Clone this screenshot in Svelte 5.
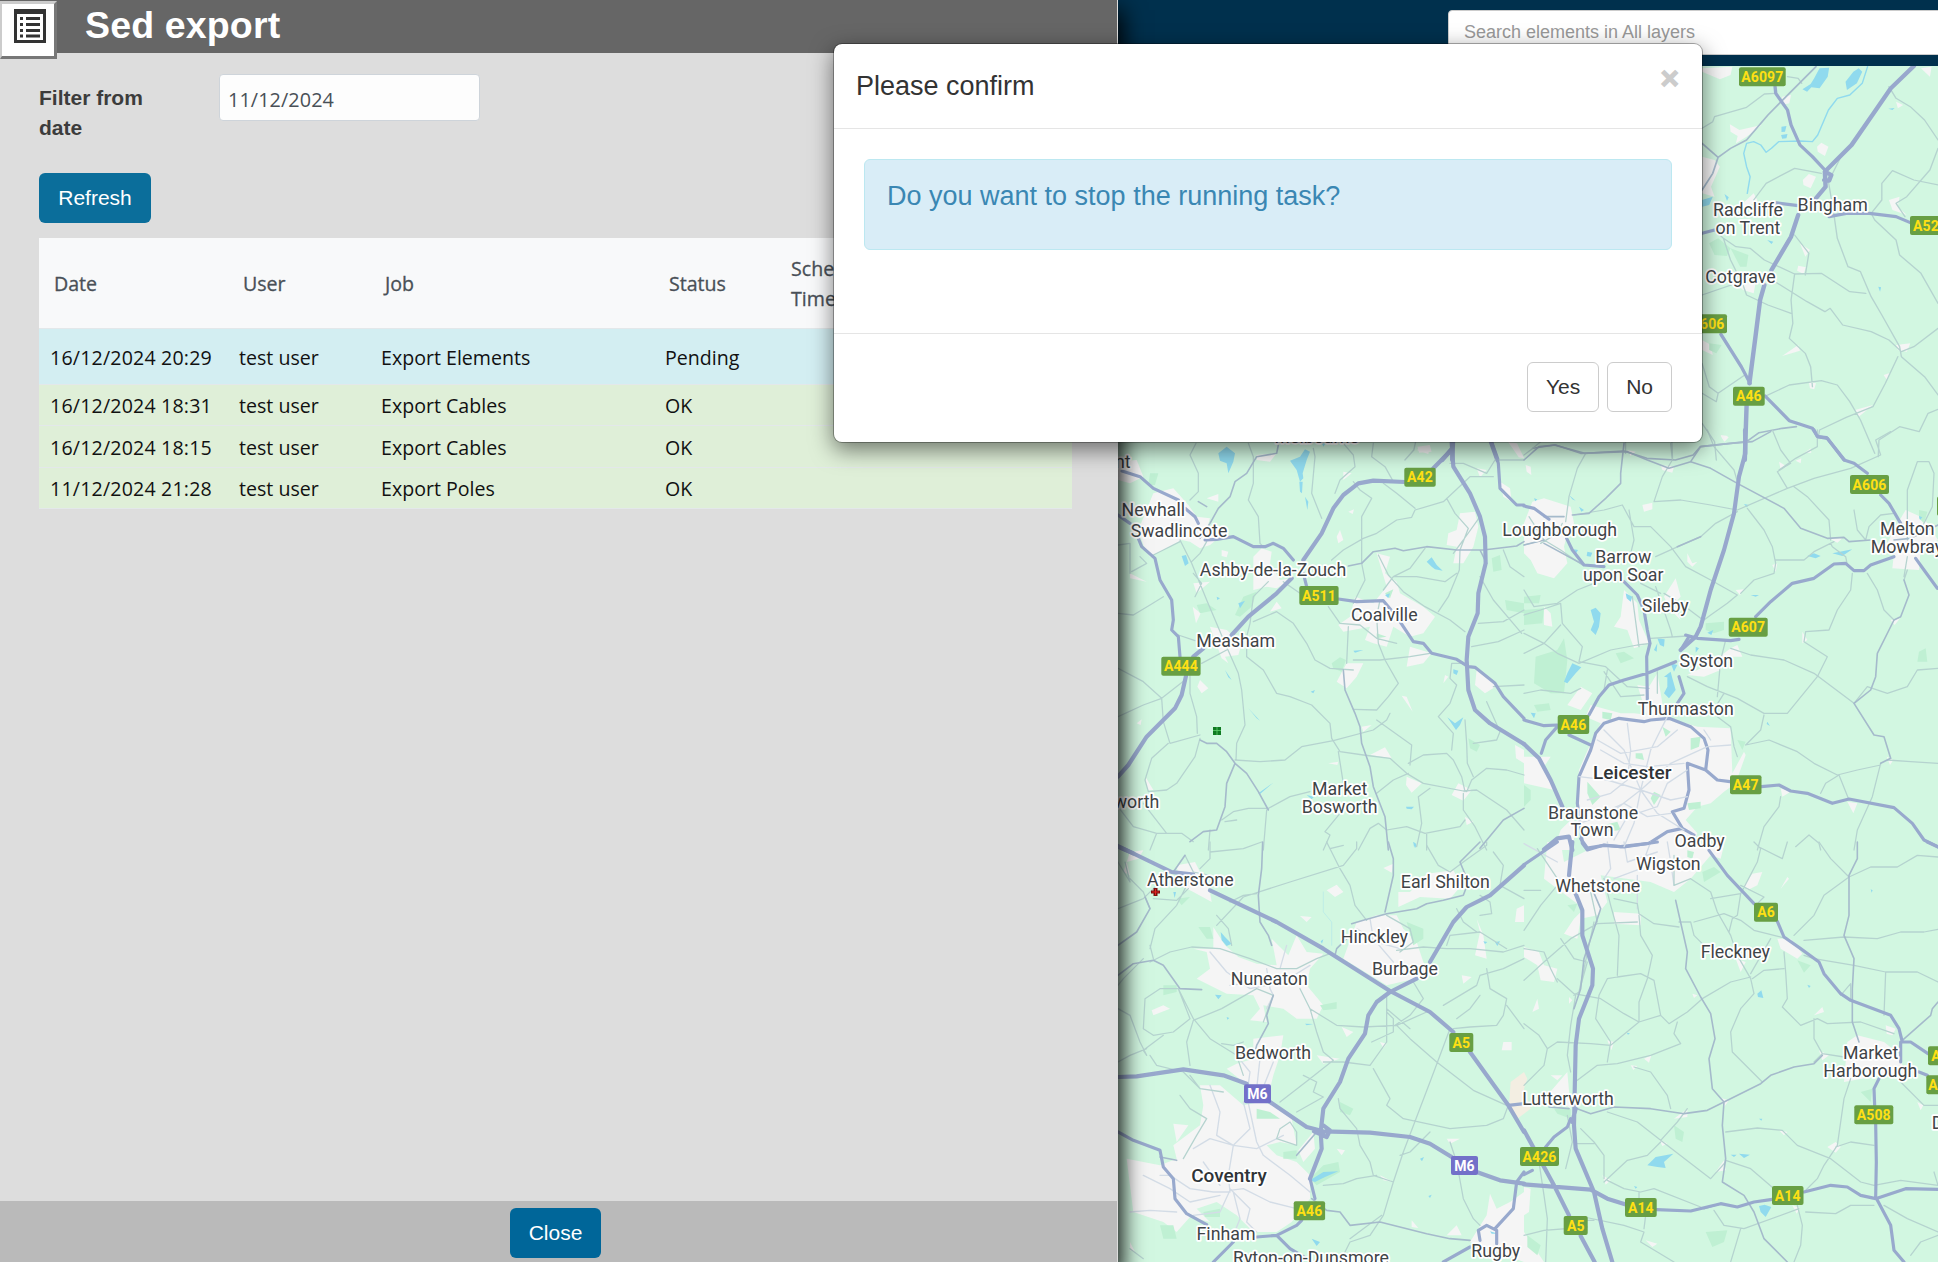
<script>
  const columns = ['Date', 'User', 'Job', 'Status', 'Scheduled Time'];
  const jobs = [
    { date: '16/12/2024 20:29', user: 'test user', job: 'Export Elements', status: 'Pending', state: 'pending' },
    { date: '16/12/2024 18:31', user: 'test user', job: 'Export Cables', status: 'OK', state: 'done' },
    { date: '16/12/2024 18:15', user: 'test user', job: 'Export Cables', status: 'OK', state: 'done tall' },
    { date: '11/12/2024 21:28', user: 'test user', job: 'Export Poles', status: 'OK', state: 'done' }
  ];

  const third = 1 / 3;

  // Each tile holds its own vector layers, drawn in tile units.
  const tiles = [
    {
      at: `translate(1380 0) scale(.3559 ${third})`,
      urban: 'M905 205 990 200 985 225 955 238 905 215ZM983 373 1010 390 1072 375 1030 410 1000 430 1005 408 985 395ZM905 470 940 480 955 500 930 560 940 590 905 580ZM1130 290 1155 285 1150 310 1130 315ZM1228 440 1240 428 1260 440 1250 468 1230 455ZM1188 540 1205 522 1225 530 1210 565 1190 555ZM1430 600 1460 590 1455 620 1480 645 1440 630ZM990 640 1050 580 1060 600 1030 625ZM1000 850 1055 850 1050 880 1020 870ZM1130 1068 1175 1035 1180 1052ZM1450 1035 1490 1030 1480 1055 1455 1050ZM1180 730 1208 750 1195 770ZM1175 797 1197 802 1190 822 1172 812ZM1205 1145 1225 1150 1220 1168 1208 1165ZM1335 1230 1385 1215 1345 1250ZM1415 1125 1435 1118 1425 1140ZM905 1020 930 1035 935 1065 905 1050ZM957 1308 980 1312 968 1325ZM105 1340 140 1335 145 1355 110 1358ZM360 1326 385 1330 405 1375 390 1372ZM1520 205 1550 200 1545 230ZM1450 305 1470 315 1455 325Z',
      wood: 'M925 730 950 715 985 745 975 768 940 765ZM985 745 1035 765 1030 800 1012 800ZM925 1030 960 1035 945 1060 925 1050Z',
      water: 'M1235 205 1262 203 1258 230 1235 265 1212 262 1200 275 1187 268 1210 252 1220 235ZM1330 215 1345 205 1355 215 1340 250 1312 270 1308 245ZM1128 380 1142 378 1138 395 1128 396ZM1127 405 1145 402 1142 415 1130 416ZM905 600 935 590 925 615 905 620ZM968 582 980 592 975 603ZM1088 720 1105 725 1100 732ZM1400 860 1408 862 1405 875ZM1428 326 1446 324 1440 330Z',
      river: 'M1370 200 1355 250 1320 285 1285 295 1260 330 1230 405 1215 425 1180 423 1120 425 1100 445 1085 457 1070 435 1050 425 1030 430 1022 460 1030 500 1040 530 1032 580',
      minor: 'M905 385 935 365 940 350 1030 322 1080 282 1110 280M1145 230 1175 235 1185 250M1430 260 1450 295 1490 320 1530 360 1568 420M1568 445 1545 510 1480 590 1450 610 1475 650M1050 600 1085 550 1165 505 1240 520M1295 470 1260 545 1275 640 1285 715 1315 800 1350 815 1380 890 1410 945 1460 1040 1465 1070 1530 1130 1568 1185M1165 705 1205 760 1195 825M940 690 965 715 1000 740 1040 745 1080 780 1165 822 1240 820 1320 875 1365 880M965 715 985 780 1020 855 1030 885 1090 915 1155 940M1165 822 1155 900 1160 970 1150 1015 1195 1060 1210 1100 1215 1160M1110 845 1200 905 1250 935 1265 925 1300 975 1380 995 1430 1020 1465 1055 1500 1040 1568 985M1080 1190 1150 1155 1240 1142 1285 1155 1320 1205 1350 1260 1390 1360M1380 640 1390 660 1450 720 1460 765 1520 820 1568 910M1380 640 1410 600 1410 550 1440 512 1500 540 1568 555M1455 1070 1420 1150 1385 1220 1310 1252 1235 1290 1232 1310M905 885 1000 850M905 1180 945 1205 950 1180 1025 1125M905 1090 925 1160 950 1180M1400 1370 1402 1320 1460 1280 1515 1295 1540 1240 1568 1228M905 1270 940 1325 945 1380M690 1326 690 1360M820 1326 822 1380M100 1326 95 1350 70 1380',
      road: 'M1225 200 1150 280 1090 345 1030 420 985 445 950 472 905 430M950 472 935 520 905 570M430 1345 490 1335 575 1360 685 1353 750 1375 830 1380 880 1365 900 1340 1030 1325 1065 1298 1130 1285 1170 1280',
      trunk: 'M1110 260 1112 280 1145 330 1155 375 1180 435 1215 470 1250 510M1262 650 1310 640 1375 640 1450 650 1490 668M1110 608 1175 617M905 700 940 690M958 1003 1015 1100 1040 1150M1082 1188 1150 1262 1172 1270 1215 1285 1230 1310 1255 1313 1305 1380',
      motor: 'M1500 198 1435 265 1390 335 1325 435 1250 515 1252 560 1225 595M1175 645 1155 710 1100 810M1080 855 1068 900 1055 1010 1038 1150M1030 1217 1025 1380M205 1326 203 1380M312 1326 330 1380M203 1345 175 1380M1250 515 1268 525 1262 542 1248 540'
    },
    {
      at: `translate(1110 430) scale(${third})`,
      urban: 'M24 95 80 90 100 140 60 160 24 150ZM130 190 190 175 235 225 260 260 300 265 290 300 330 320 300 345 270 355 240 335 215 330 160 360 120 380 100 345 85 300ZM290 205 325 192 325 215ZM440 75 500 70 480 95 440 90ZM335 360 355 365 350 382 335 378ZM430 380 455 355 485 365 480 400 510 450 550 445 500 475 470 470 430 480ZM250 460 300 455 260 490ZM60 430 110 455 60 445ZM1050 250 1095 245 1105 290 1090 350 1060 400 1030 400 1040 350 1010 345 1015 310 1040 300ZM800 370 840 380 825 430 860 455 870 490 940 530 975 560 940 610 900 620 850 590 830 650 790 640 765 630 780 590 700 605 685 585 720 560 735 500 790 520 830 470ZM690 300 700 330 685 340 680 320ZM900 650 965 670 940 700 890 710ZM710 700 760 700 740 740 710 775 680 755ZM270 750 295 775 275 790 262 770ZM300 590 350 600 395 640 385 675 345 680 355 700 335 685ZM248 530 272 550 258 580ZM500 515 515 535 480 545ZM875 797 890 800 908 845ZM1100 720 1165 765 1125 790 1095 765ZM890 1040 935 1060 905 1088 888 1065ZM1045 1060 1085 1080 1060 1112 1025 1095ZM780 975 825 952 845 985ZM105 1038 130 1080 112 1080ZM80 880 95 868 92 885ZM655 1000 685 995 682 1005ZM1215 945 1242 960 1242 1000 1218 985ZM920 60 960 45 955 72ZM700 125 725 130 700 150ZM1100 115 1130 120 1110 142ZM1170 155 1200 175 1205 215 1180 200ZM715 245 732 238 728 252ZM1065 1160 1090 1175 1070 1185ZM1005 735 1015 740 1000 760ZM755 890 785 885 760 905Z',
      wood: 'M120 130 145 130 135 165 115 165ZM260 525 290 520 320 540 270 550ZM400 500 440 485 425 530 390 560 375 555ZM665 700 690 682 708 690 695 725 670 715ZM1145 385 1170 375 1175 420 1150 425ZM1185 510 1242 520 1242 550 1190 540ZM1075 925 1110 945 1100 965 1080 955ZM825 490 850 478 840 505ZM800 610 830 620 800 625Z',
      water: 'M325 70 350 50 375 70 370 95 355 130 350 100 330 92ZM570 80 585 58 600 65 590 90 578 130 580 145 570 155 560 120 540 92ZM568 155 578 155 576 190 570 185ZM585 200 595 215 592 240ZM215 378 228 375 236 400 225 408ZM950 395 965 382 980 405 998 422 975 418 965 410ZM385 520 405 512 390 535ZM1012 862 1035 880 1060 862 1050 885 1038 900ZM1030 718 1045 722 1040 735 1030 730ZM730 662 760 660 735 668ZM825 495 840 490 835 505ZM415 835 450 872 440 865ZM345 720 365 750 355 742ZM445 1090 490 1058 450 1092ZM602 785 615 780 610 790ZM888 1130 912 1130 905 1138 890 1136ZM320 500 330 505 322 510ZM590 1095 612 1100 605 1108ZM635 38 645 42 640 50ZM910 1235 920 1245 915 1255Z',
      river: '',
      minor: 'M258 40 240 75 265 130 265 185 240 210M415 40 430 80 430 160 415 210 445 260 450 340 460 350M610 55 615 80 605 190 635 265M700 40 730 75 735 110 690 150 675 190M790 40 785 80 825 110 850 155M1020 100 1060 100 1130 130 1155 90 1242 90M1150 140 1080 140 1000 215 915 240 905 262 860 270 800 310 760 325 700 360 665 390M730 155 750 180 785 205 755 260 755 325 755 400 765 450 745 490 730 520M820 160 860 190 915 235M1010 205 1035 250 1075 295 1050 360 1048 420 1015 500 985 545M1110 260 1060 330 1030 370M945 355 900 415 850 440 820 480M805 375 835 435 880 485 945 530 1020 570 1065 605M850 440 920 440 1005 455 1040 430M1110 440 1150 510 1235 610M1180 360 1200 410 1242 440M1105 580 1180 575 1242 540M1085 650 1165 635 1242 600M1065 870 1070 940 1072 1000 1090 1040M210 330 245 400 290 510 345 640 385 730 395 780 405 885 380 940 378 990M290 335 270 370 245 395M24 550 70 555 120 525 160 500M255 500 275 460 250 430M475 455 430 500 420 580 410 620 410 680M410 680 460 720 500 790 540 800 605 825 660 880 665 925 690 965M430 575 500 545 550 580 590 640 615 690 660 715 730 720M730 690 810 690 900 680 960 670M520 455 570 490M655 530 690 580 750 585 800 625 860 640M810 510 800 560 805 640 825 690 865 760 835 800 800 840 730 838M715 590 710 700M24 345 60 340 60 430M65 425 110 400 90 380M210 335 160 360 130 375M205 615 255 632M275 700 350 660M24 860 100 825 155 805 225 750M24 715 100 755 155 805 160 875 180 940 270 915M270 925 255 980 200 1060 170 1080 115 1085 105 1050 125 985 175 940M240 735 240 790 260 860 262 910M375 990 450 995 525 990 575 950 670 932 790 900 830 870 840 850M800 870 905 945 900 1005M685 965 700 1060 690 1090M690 965 760 975 840 985 890 1030 940 1060 1060 1083 1100 1080 1190 1140 1242 1200M895 1000 940 975 1010 970 1030 990 1055 1040 1065 1085M1025 960 1030 910 985 860 1020 820 1040 765 1020 745 1025 700 1060 700M1130 815 1170 905 1160 930 1090 940M800 1090 850 1050 895 1030M960 1075 925 1100 935 1180 920 1250M24 1130 70 1190 140 1210 215 1210 250 1235 M100 1120 135 1165 170 1210M140 1210 120 1260M300 1200 295 1260M335 1170 370 1145 415 1135 475 1135 540 1100 600 1085M345 1175 380 1170M470 1140 460 1260M640 1260 660 1215 645 1205 690 1150M745 1260 780 1195 805 1180 830 1200 890 1190 945 1210 1050 1190 1065 1170M950 1210 950 1260M1060 1090 1060 1140 1095 1190 1130 1260M1150 770 1242 765M1085 1050 1130 1015 1190 1020 1242 1035M1070 1085 1085 1050',
      road: 'M505 45 500 70 440 80 410 130 375 155 360 200 325 235 300 280 270 325M715 408 755 400 790 365 855 355 880 362 950 350 1040 360 1120 360 1220 348 1242 335M700 720 705 780 735 850 750 890 755 940 780 1010 790 1070 825 1160 835 1260M270 930 290 940 320 940 350 965 375 1000 410 1030 445 1085 475 1140M375 1000 350 1060 345 1130 320 1200 280 1205 240 1235M1242 1135 1180 1170 1110 1255M1110 360 1130 400M265 215 290 230',
      trunk: 'M36 123 90 140 130 175 205 210M225 235 255 260 265 280M285 330 320 328 370 320 430 350 465 350 490 340 520 355 550 390M580 430 590 470M685 507 740 515 820 512 860 560 910 635 940 640 965 670 1040 688 1075 710 1095 712 1155 760 1180 800 1242 865M85 325 95 350 135 385 150 450 185 510 190 570 185 600 205 620 210 680M24 255 60 280M1145 38 1165 100 1170 175 1220 225 1242 225',
      motor: 'M1024 60 970 115M884 156 790 152 745 160 700 195 670 235 635 310 580 390M545 445 500 490 415 560 365 615M280 655 250 680M228 738 215 795 195 835 110 920 55 1005 24 1040M1025 38 1030 110 1080 190 1110 260 1125 320 1127 400 1105 490 1103 550 1075 620 1070 690 1075 780 1095 840 1140 880 1242 942M24 1250 70 1270'
    },
    {
      at: `translate(1524 430) scale(${third})`,
      urban: 'M25 215 60 205 140 230 150 280 130 310 120 350 130 400 90 445 40 430 20 390 0 370 0 280ZM355 225 385 218 385 238 360 245ZM455 445 470 500 450 520 470 570 440 540 420 500ZM490 370 505 400 520 395 505 410 490 395ZM300 480 340 520 345 570 375 640 330 655 310 600 270 590 290 560ZM60 530 80 550 85 590 60 585ZM1145 240 1200 265 1242 330 1190 355 1185 420 1105 415 1110 370 1090 340 1115 290ZM640 645 655 680 610 680 590 720 540 740 490 735 560 700 620 655ZM340 765 375 770 400 730 420 850 370 860ZM185 860 200 825 290 850 330 850 420 860 520 890 620 895 625 1030 660 965 665 975 635 1060 600 1085 560 1120 520 1130 485 1170 520 1210 500 1260 190 1260 165 1200 160 1090 165 1020 200 940 230 880ZM150 1160 150 1260 90 1260 110 1200ZM0 980 80 980 60 1010 90 1080 0 1060ZM310 60 335 65 320 78ZM410 105 450 110 445 128 415 120ZM1100 570 1128 565 1112 585ZM970 1115 1000 1120 988 1150ZM835 605 850 630 835 640ZM770 1075 800 1085 775 1100ZM5 105 20 110 22 135 8 125ZM590 15 612 18 600 32ZM840 70 860 55 862 68ZM765 95 790 110 770 118ZM815 92 832 85 830 100ZM635 480 660 478 648 495ZM745 405 760 400 755 425ZM1088 980 1108 990 1098 1005ZM915 325 955 325 940 338ZM170 770 205 790 170 840 130 825Z',
      wood: 'M35 680 100 660 120 625 130 690 120 790 80 790 30 760ZM0 500 50 495 45 520 0 520ZM0 540 60 535 55 580 0 585ZM275 670 300 665 330 685 290 700ZM545 580 600 575 600 600 570 610 545 600ZM1185 665 1205 655 1210 695 1180 695ZM235 845 265 850 260 870 235 865ZM30 825 75 820 80 840 40 845ZM190 1055 230 1100 205 1125 190 1090ZM390 1085 410 1095 390 1125 380 1105ZM335 970 355 970 360 990 335 985ZM1185 240 1210 245 1200 280 1185 265ZM500 925 530 920 525 950 500 960ZM415 890 440 905 425 920ZM0 1065 20 1080 20 1110 0 1130ZM490 1120 530 1115 530 1135 495 1140ZM240 1185 280 1175 290 1200 250 1205ZM640 930 665 935 655 960Z',
      water: 'M200 540 215 533 230 550 225 590 215 615 200 600 210 575ZM145 700 172 712 155 730 130 760 120 755 130 730ZM850 378 870 370 890 378 875 385ZM925 370 985 358 955 378ZM190 365 205 368 200 380 188 378ZM400 625 422 628 420 650 408 645ZM390 660 400 640 398 665ZM430 740 445 745 455 780 435 805 420 790 430 770ZM420 740 440 725 445 745ZM440 700 460 705 450 725ZM515 650 525 655 515 668ZM550 608 568 600 562 615ZM20 848 35 850 30 865ZM660 222 675 225 668 232ZM680 495 705 495 695 500ZM305 490 325 500 320 515 308 505ZM150 358 162 360 155 372ZM30 205 40 208 34 214ZM165 230 180 240 172 245ZM730 875 738 888 728 882ZM1185 258 1195 262 1188 270ZM135 195 155 212 145 208Z',
      river: '',
      minor: 'M550 0 570 50 630 120 640 155M745 0 770 60 800 100 760 125 790 175M0 75 20 60 50 35M185 70 160 115 135 200 125 275M440 40 445 90 415 140 390 215M390 215 470 210 560 225 640 240 790 175 870 145 980 115 1070 75 1055 30 1100 5M880 0 880 50 815 85 765 120M810 170 850 200 915 270 920 330M670 235 720 300 745 350 755 400M755 400 750 430 690 450 650 490M640 245 575 280 530 320 450 355 395 380M380 290 440 350 485 410 560 450 640 495 610 520 560 555 540 570M150 255 240 240 295 225 330 290 380 290M315 240 330 330 320 370M0 480 30 530 100 520 160 480 210 460M0 555 50 540 110 520 115 580 175 650 165 695 245 710 310 770 375 775M110 585 60 640 0 670M0 610 60 640 100 670 165 700 260 660 340 645 380 640M60 330 110 360 175 405M15 260 60 330 0 345M50 290 0 320M115 280 100 310 50 340M325 500 345 650M395 470 440 600 445 620M380 625 490 618M420 490 470 520 530 565M350 460 410 490M605 630 590 690 580 800M490 740 550 770 640 805 720 850 790 850 880 740 910 680 840 635 845 605 915 600 940 540 980 480 985 430M620 655 680 675 780 690 870 730 990 820 1030 770 1090 790 1150 770 1180 720 1242 715M720 855 710 900 665 945 735 930 820 965 870 1000 940 1035 1000 1020 1070 1005M1090 990 1160 995 1242 1000M1070 1000 1045 1100 1000 1200 990 1260M890 1090 905 1060 945 1035M945 1035 975 1110M770 1100 765 1130 720 1190 700 1260M815 1250 855 1215 885 1240 890 1260M1150 330 1150 180 1180 95 1215 95 1230 130 1225 230 1190 300M1150 420 1140 450M1030 430 1060 480 1080 540 1110 570M920 340 925 350 965 380 970 405M1150 380 1140 440M990 240 1000 300 1025 330 1035 290 1070 255 1110 250M755 390 840 390 870 365 930 335M0 790 50 780 140 790 170 775M240 725 290 800 360 795M250 720 240 780M400 725 400 790M580 860 620 890 630 950 640 980M600 790 575 830',
      road: 'M0 90 45 50 95 45 170 70 310 65 370 90 435 115 500 95 530 50 620 40 685 35 740 5M500 95 560 115 640 160 780 235 830 295 910 325 960 322 975 335 1040 330M0 345 60 330M145 255 195 250 245 205 290 160 290 130 300 40M60 260 120 260M1110 330 1160 325 1242 285M1140 450 1155 495 1130 560 1110 570 1060 670 1055 740 1040 780 990 820 1050 915 1080 920 1100 985 1070 1000 M530 320 460 350M60 340 180 405',
      trunk: 'M0 228 30 235 75 268M128 325 145 360 180 405 240 410M300 455 340 495 360 540 370 600 378 640 368 680 370 810M1240 475 1200 420 1175 385M1110 380 1040 405 1020 422 990 422 965 400 930 402 870 445 805 460 740 515 695 560M645 628 620 632 520 625 485 615M870 0 880 20 910 25 960 90 990 100 1030 130M1070 195 1095 220 1130 280M0 870 60 887 100 885M135 915 200 945M495 620 470 660M465 740 480 790 460 820M360 875 380 870 435 865 500 890 540 925 552 960 545 1020 490 1000 495 1080 480 1135 445 1145 475 1195 510 1215M545 1020 580 1050 618 1055M712 1070 765 1065 800 1083 850 1090 925 1120 975 1107 1110 1133 1165 1180 1200 1230 1242 1250M475 1195 430 1205 375 1240 290 1250 240 1245 190 1260 175 1240 170 1190 160 1120 165 1040 200 960 215 910 240 880 285 865 360 875M100 890 65 930 52 970M455 695 370 730 300 750 255 765 225 800 195 855',
      motor: 'M663 0 664 70 645 140 630 250 600 360 560 480 530 590 515 620 470 660M0 942 45 985 80 1050 115 1130M60 1258 100 1225 135 1220 145 1260'
    },
    {
      at: `translate(1110 842) scale(${third})`,
      urban: 'M60 30 100 25 85 50 50 60 60 100 40 90ZM200 70 255 60 300 150 305 180 250 150 210 130ZM310 255 345 310 385 345 440 365 500 370 485 290 535 340 560 280 590 330 640 335 600 380 590 430 640 490 620 530 560 530 520 500 460 490 470 540 420 535 450 500 430 460 350 455 260 410 300 380 290 330 250 320 310 320ZM650 145 680 128 700 150 675 165ZM740 240 800 220 860 220 880 260 920 300 940 360 960 400 830 430 700 350ZM865 150 900 150 950 95 1030 85 1055 130 1020 170 930 165 865 195ZM430 590 520 580 510 640 490 700 480 740 400 720 350 680 380 665 430 650ZM620 640 690 650 640 665ZM695 555 730 570 710 585ZM1180 600 1205 600 1205 625 1175 625ZM1055 400 1085 405 1060 425ZM125 505 160 490 180 500 130 520ZM270 730 330 730 400 790 450 780 500 790 545 830 560 910 510 900 470 910 500 940 560 960 600 1000 600 1070 545 1140 500 1170 430 1170 380 1120 320 1080 260 1100 300 1140 240 1125 200 1170 160 1140 70 1110 50 950 150 970 200 950 190 910 270 850 280 790ZM565 925 610 870 615 920 580 960ZM190 845 235 850 200 900ZM1010 890 1050 890 1020 905ZM680 920 705 925 695 940ZM1140 1055 1160 1100 1200 1080 1242 1050 1242 1260 1080 1200 1130 1120ZM1010 1180 1040 1150 1055 1180ZM1220 200 1242 190 1242 240 1215 240ZM1100 230 1120 280 1130 350 1095 340 1110 270ZM820 78 850 65 845 92ZM570 222 605 225 590 240ZM810 600 830 605 820 618ZM810 1000 850 1020 820 1015ZM905 1135 925 1158 905 1155ZM60 1200 75 1230 60 1225Z',
      wood: 'M265 255 300 255 310 290 290 290ZM890 240 940 260 940 290 910 310ZM630 490 680 480 680 500 640 505ZM690 780 730 800 720 820 690 810ZM520 930 560 925 560 950 520 950ZM640 970 685 960 690 990 620 1030 600 1010ZM160 430 200 430 200 450 160 460ZM200 170 240 165 215 190ZM440 800 480 810 510 830 440 830ZM280 1110 330 1100 330 1125 285 1125ZM150 1150 190 1150 200 1190 160 1190Z',
      water: 'M332 270 345 285 365 305 350 312 335 295ZM190 150 198 150 194 168ZM600 1015 640 990 685 988 645 1005 615 1020ZM605 1190 630 1200 620 1212ZM1155 300 1170 298 1162 312ZM1120 298 1132 300 1125 306ZM315 458 335 460 325 472ZM585 545 610 546 590 550ZM350 525 358 528 352 533ZM930 950 942 945 936 958ZM955 1062 965 1058 960 1068ZM910 0 918 5 912 15ZM632 298 640 292 636 305ZM1140 1168 1165 1175 1145 1175Z',
      river: '',
      brook: 'M640 150 640 210 665 240 665 310',
      minor: 'M60 110 100 150 120 200M24 200 100 170 125 145 180 90M225 40 250 90 300 100M300 0 300 50 270 80M300 30 400 20 455 0M24 60 60 120 45 60M120 310 130 350M120 320 135 260 200 190 235 120M130 170 200 175 235 140M24 430 40 410 100 350M365 310 355 260 320 220M320 250 400 165 540 120 700 70 740 20 740 0M650 0 690 80 720 130 735 190 770 235M700 10 660 20M360 180 400 160 440 155M120 360 180 330 245 315 330 320 420 350 500 380 560 380 620 350 660 335M205 440 250 530 300 590 380 640 400 700M205 440 240 530 190 570 130 580 100 560 105 470 150 440 205 440M250 535 335 500 440 440 490 460M250 535 230 600 240 670M24 500 60 520 90 600 110 640 100 625 160 580M24 660 60 640 110 620M335 605 370 610 400 600M490 460 460 540M570 440 600 500 680 550 760 555 860 550 950 510M600 500 620 570 640 630 670 655M640 660 700 660 780 670 830 600 830 540 830 460M785 600 850 570 850 530 830 510M670 655 600 710 510 780M580 700 620 720 610 750 640 765 560 810M790 680 840 770 830 790 880 830 1020 860 1130 850 1180 830 1195 790M860 550 900 590 980 660 1090 745 1190 790M1020 560 960 720 880 930 850 1020 820 1120M830 500 900 560M910 420 940 470 900 520 855 550M860 325 940 315 1010 320 1080 320 1180 330 1242 310M1010 310 1020 280 1110 270 1190 320M1100 270 1060 240 1040 200M1110 220 1145 215 1140 180 1110 160M830 220 900 260 910 300 870 330M1242 350 1180 380 1110 400 1100 430 1000 490M1130 380 1140 440 1190 470 1180 520 1160 550 1080 555 1030 560M1190 490 1242 560M950 10 985 70 1020 90 1060 60M1060 60 1130 10 1130 0M1150 30 1180 70 1170 130 1242 170M1110 460 1080 500 1040 530M685 770 690 800 740 860 750 910 780 960 790 1000 850 1020M640 1030 700 1025 740 1010 800 1000M960 870 900 930 870 940M1020 900 1040 960 1060 1070 1090 1130 1110 1150M720 1190 760 1160 815 1120M240 700 270 740 340 750M210 760 240 800 290 830 260 880 220 950M120 640 140 670 220 690 270 740M500 890 510 860 540 840 560 870 560 910 500 890M60 1220 100 1250M820 1120 780 1180 720 1200 690 1260',
      street: 'M300 730 330 810 320 880 370 910 420 860 400 780M380 640 420 690 410 760 440 900 460 940 540 1000 600 1050M250 920 300 890 370 910 440 920 520 880M370 910 355 1000 360 1050 310 1050 240 1040 180 1000 150 1000M360 1040 420 1100 410 1140 440 1170M360 1045 330 1110 250 1120M360 1045 400 1040 480 1080 560 1100 600 1080M370 1050 390 1130 370 1180M100 1000 180 1040 240 1080 330 1060M60 1110 120 1105 200 1110M470 380 480 440 490 460 470 500M300 330 350 390 420 440 520 420 600 370M510 380 530 310M440 420 360 430M780 230 790 290 850 360M740 260 800 300 870 320M450 650 440 740M490 660 450 760M280 960 330 1030',
      road: 'M24 310 80 270 120 200 105 165M24 400 70 365 130 355 160 370 210 440 275 443M190 90 225 40M458 0 455 80 445 160 450 240 475 280 485 310M490 460 470 520 475 545 440 610 430 650M835 0 850 50 850 100 825 210M725 245 760 235 830 215 920 200 950 185 1000 175 1060 160 1075 120 1050 60 1110 0M675 340 680 320 730 270M605 1070 650 1105 690 1110 720 1150 810 1140 950 1175 1020 1190 1080 1195M560 940 620 870M150 945 200 955',
      trunk: 'M24 870 70 895 150 925 160 975 190 1010 195 1070 230 1115 290 1148M310 1260 370 1200M1000 1260 1080 1215M1110 1195 1105 1165 1130 1150 1160 1165 1160 1205M1155 1160 1210 1100 1220 1020 1242 990M500 1180 540 1220 590 1250M440 1185 500 1180 560 1150 575 1135M600 1010 615 1070M1195 790 1242 785',
      motor: 'M24 12 185 90 250 98M300 145 500 240 640 320 840 447 960 510 1030 570M1080 630 1195 790 1242 870M24 705 80 703 220 682 340 700 410 725M480 780 590 855 640 868 780 872 900 885 960 905 1025 945M1100 990 1170 1015 1242 1025M1242 70 1140 160 1070 195 1030 240 960 360M920 410 840 450 800 480 775 520 765 575 715 650 690 720 640 800 632 870 635 920 600 1010M612 868 650 885 660 865 640 850'
    },
    {
      at: `translate(1524 842) scale(${third})`,
      urban: 'M70 0 110 0 120 60 180 30 240 0 420 0 600 10 590 50 560 40 500 110 450 150 380 120 230 100 250 180 220 220 170 230 160 290 120 275 150 230 180 200 100 140 60 110ZM270 210 350 215 350 250 270 245ZM685 95 715 90 700 130 670 145 660 130ZM790 105 795 110 770 140ZM760 290 800 290 835 335 820 350 770 320ZM635 350 665 360 650 390ZM0 315 45 330 60 370 100 380 90 420 50 415 40 370 0 345ZM40 470 45 500 25 510ZM1000 580 1080 600 1130 640 1140 700 1070 700 960 720 970 600ZM1085 550 1115 560 1105 580 1088 575ZM870 520 895 495 900 510ZM130 690 140 800 100 770 70 760ZM450 830 490 800 490 825ZM575 990 600 955 605 985ZM910 915 935 900 950 915 935 932ZM405 890 430 905 415 912ZM235 1000 260 1015 245 1028ZM885 625 915 640 895 655ZM365 1195 400 1205 385 1215ZM0 1035 20 1040 15 1110 0 1120ZM0 1170 60 1260 0 1260ZM250 595 270 600 262 625ZM360 650 382 640 375 662ZM590 768 615 775 600 795ZM1180 780 1198 790 1190 805ZM505 455 520 460 510 468ZM135 465 145 475 135 485ZM765 865 790 870 780 880ZM80 700 115 700 100 715ZM805 1090 828 1098 818 1115ZM320 670 340 672 328 684Z',
      sand: 'M-40 720 0 690 10 710 0 740 20 800 0 815 -20 830 -45 790Z',
      wood: 'M535 90 570 75 590 90 540 120ZM820 355 860 370 840 392ZM1010 750 1045 740 1040 780ZM450 850 480 870 475 900 455 890ZM545 1170 610 1165 600 1200 565 1215ZM10 1180 50 1210 40 1240 10 1215ZM130 190 160 185 150 210ZM90 800 140 800 140 830 100 815ZM490 25 510 30 505 50 490 45Z',
      water: 'M370 970 395 945 448 935 420 960 425 978 400 975ZM705 1092 722 1088 742 1095 725 1125 710 1110ZM700 455 712 445 718 468 702 465ZM645 935 678 938 660 948ZM620 938 638 938 630 945ZM850 428 860 432 855 438ZM1040 142 1046 145 1043 152ZM330 1032 340 1035 335 1040ZM705 830 715 830 712 836ZM308 572 318 574 312 578Z',
      river: '',
      minor: 'M0 145 50 145M0 265 50 190 100 130M110 290 150 350 190 360 165 450 150 460M0 415 60 360 140 290 220 245 340 240M100 410 150 455 230 470 300 515 345 540M240 110 260 190 285 280 280 400M270 170 340 185 345 215 390 245 465 255M345 220 350 280 385 340 370 410 345 480 345 540 410 520M280 405 350 395 390 415 410 520 435 545 490 510 535 470 620 420 680 405M280 405 250 410 225 460 215 530 260 600M0 320 60 330 80 380 100 420M465 240 500 240 510 280 540 310M510 240 600 215 650 235 690 265 790 290M450 40 450 130 500 110 560 150 580 210 620 280 640 340 680 410 690 455 650 500 620 570 625 630 715 720M560 170 650 155 640 220 625 230 615 270M650 155 700 60 710 20 690 0M650 130 720 165 700 185M705 15 775 50 790 0M975 105 900 160 870 220 810 280M885 0 920 50 975 105 1040 75 1120 75 1180 40 1242 45M840 295 960 285 1060 290 1130 270 1200 270 1242 262M990 370 870 350 840 340M990 370 1085 390 1180 390 1242 420M1085 390 1080 520M780 330 785 390 790 470 775 495 830 550 880 530 910 545 1010 540 1110 575M870 530 870 590 895 635 960 645M740 290 680 395M685 410 720 385 780 380M950 460 980 425 980 470M895 635 870 660M980 710 960 770 940 910 900 970 880 1010 840 1050M1130 720 1200 790 1242 790M605 870 700 858 775 865 820 910 920 950 1010 1020 1050 1030 1130 1015 1242 1030M935 915 980 900 1050 910M845 1110 935 1115 980 1090 1050 1090M825 1100 660 1160 600 1150 570 1105M820 1090 835 1150 830 1210 810 1260M650 1160 620 1260M605 955 680 980 750 1040M250 810 340 840 410 895 560 1010 605 960M410 900 370 940 310 955 240 1020M240 1010 240 940 210 900 170 860M410 895 460 840 490 800M155 460 140 550 130 640 140 690M70 620 100 600 200 605 260 610 345 540M260 600 250 660M160 715 220 670 280 665 380 640 470 605 450 575 460 540M330 675 380 690 430 760 440 800M0 545 45 580 70 620 60 670 0 730M160 905 210 905M250 1015 300 1040 350 1050 390 1040 530 1095M0 1180 60 1165 190 1155M180 1125 300 1150 360 1170 350 1200 400 1230 450 1260M360 1160 365 1120M45 960 60 1060 70 1130 65 1260M345 1070 345 1050M1080 1090 1150 1130 1242 1170M1160 1240 1190 1200 1242 1180M130 820 145 900 125 980M210 1135 160 1135M220 240 200 150M165 450 180 380 210 240M40 20 100 110M1230 990 1242 1030',
      street: 'M250 0 260 80 240 110M300 0 310 60 400 30M430 0 440 60 450 130M380 0 350 80 270 110M340 100 340 200M0 5 100 60',
      road: 'M455 175 490 330 485 380 530 465 560 515 573 590 555 650 565 740 600 780 595 850 605 950 595 1020 660 1060 690 1110 720 1190 790 1260M160 800 200 815 270 795 380 800 480 815 550 805 600 780 710 725 740 700 810 675 870 665 895 640M1000 0 1000 50 975 100 975 220 960 280 990 350 985 440 985 540 1005 600M540 1100 590 1085M1135 595 1220 520 1225 500 1242 480M75 795 135 800M200 130 230 200 180 350 170 440 150 500',
      trunk: 'M0 68 100 0M170 -10 190 18 240 10 300 15 400 0M555 25 610 100 690 185M760 238 780 285 830 320 885 360 900 395 950 455 980 475 1100 520 1125 560 1135 600 1160 600 1212 635M1130 600 1130 660 M1185 690 1210 700M1065 710 1050 740 1052 790M1055 845 1057 960 1055 1065M1055 1065 1100 1150 1110 1225 1140 1260M140 830 130 855 90 885 65 915M25 985 0 998M1210 0 1242 15M398 1103 500 1107 590 1085 640 1095 690 1080 745 1072M840 1050 920 1030 970 1035 1010 1060 1055 1070 1145 1040 1242 1042',
      motor: 'M145 0 135 100M155 155 175 205 175 280 207 380 205 430 165 530 155 610 150 850 155 920 210 1050 235 1160 265 1260M0 1027 200 1043 250 1070 303 1087M0 865 90 1030 135 1120M170 1182 212 1260M155 800 145 840'
    }
  ];

  const places = [
    ['Newhall', 1153.3, 516], ['Swadlincote', 1179, 536.6], ['Ashby-de-la-Zouch', 1273, 576],
    ['Coalville', 1384.3, 620.7], ['Measham', 1235.7, 646.7], ['Market', 1339.7, 795], ['Bosworth', 1339.7, 813],
    ['worth', 1136.5, 808.3], ['nt', 1122.7, 467.7], ['Melbourne', 1316.7, 443],
    ['Loughborough', 1559.7, 535.5], ['Barrow', 1623.3, 562.5], ['upon Soar', 1623.3, 580.5],
    ['Sileby', 1665.3, 611.7], ['Syston', 1706.3, 667], ['Thurmaston', 1685.7, 715],
    ['Braunstone', 1593, 818.7], ['Town', 1592, 836.3], ['Oadby', 1699.7, 847],
    ['Melton', 1907.3, 535], ['Mowbray', 1907, 553], ['Atherstone', 1190.3, 886.3],
    ['Earl Shilton', 1445.3, 887.7], ['Hinckley', 1374.3, 943], ['Burbage', 1405, 975],
    ['Nuneaton', 1269.3, 985.3], ['Bedworth', 1273, 1058.7], ['Finham', 1226, 1240],
    ['Ryton-on-Dunsmore', 1311, 1263.5], ['Rugby', 1495.7, 1256.7], ['Wigston', 1668.3, 869.7],
    ['Whetstone', 1597.7, 891.7], ['Fleckney', 1735.3, 958.3], ['Market', 1870.7, 1058.7],
    ['Harborough', 1870.3, 1076.7], ['Lutterworth', 1568, 1105], ['D', 1937.5, 1129],
    ['Radcliffe', 1748, 216], ['on Trent', 1748, 234.3], ['Bingham', 1832.7, 211.3], ['Cotgrave', 1740.5, 283.3]
  ];
  const cities = [['Leicester', 1632.3, 778.6], ['Coventry', 1229, 1182]];

  // name, left, top, width
  const shields = [
    ['A6097', 1739, 67.3, 46.7], ['A52', 1910, 216, 32], ['A606', 1688, 314.3, 39], ['A46', 1733, 386.7, 31.7],
    ['A42', 1404.3, 467.7, 31.4], ['A511', 1299.3, 586, 39.3], ['A444', 1161.3, 656.7, 39.3],
    ['A606', 1850, 475, 39], ['A607', 1728.7, 617.7, 39], ['A46', 1557.7, 715, 31.5], ['A47', 1730, 775.3, 31.5],
    ['A6', 1937, 496.7, 24], ['A5', 1449.3, 1033, 24], ['M6', 1244, 1084.3, 27], ['M6', 1451, 1156, 27],
    ['A46', 1293.7, 1201.3, 31.4], ['A426', 1520, 1147, 39], ['A5', 1563.7, 1216, 24], ['A14', 1625, 1198, 31.7],
    ['A14', 1772, 1186, 31.5], ['A508', 1854.3, 1105.3, 39], ['A6', 1754, 902.7, 24],
    ['A6', 1928, 1046.3, 24], ['A4304', 1926.3, 1075.3, 46]
  ];
</script>

<div class="app">
  <section class="panel">
    <header class="panel-head">
      <button class="menu" aria-label="Menu">
        <svg width="32" height="34" viewBox="0 0 32 34">
          <path class="ink" d="M0 0h32v34H0z" />
          <path class="paper" d="M3 5h26v26H3z" />
          <path class="ink" d="M6 8h3v3H6zM12 8h14v3H12zM6 14h3v3H6zM12 14h14v3H12zM6 20h3v3H6zM12 20h14v3H12zM6 25.500h3v3H6zM12 25.500h14v3H12z" />
        </svg>
      </button>
      <h1>Sed export</h1>
    </header>
    <div class="content">
      <div class="filter">
        <label for="from">Filter from date</label>
        <input id="from" type="text" value="11/12/2024" />
      </div>
      <button class="primary">Refresh</button>
      <div class="table">
        <div class="row head">
          {#each columns as c}<span>{c}</span>{/each}
        </div>
        {#each jobs as j}
          <div class="row {j.state}">
            <span class="date">{j.date}</span><span>{j.user}</span><span>{j.job}</span><span>{j.status}</span><span></span>
          </div>
        {/each}
      </div>
    </div>
    <footer class="panel-foot"><button class="primary close-panel">Close</button></footer>
  </section>

  <section class="side">
    <nav class="topbar"><div class="search">Search elements in All layers</div></nav>
    <svg class="map" width="820" height="1196" viewBox="1118 66 820 1196">
      {#each tiles as t}
        <g transform={t.at}>
          <path class="urban" d={t.urban} />
          {#if t.sand}<path class="sand" d={t.sand} />{/if}
          <path class="wood" d={t.wood} />
          <path class="water" d={t.water} />
        </g>
      {/each}
      {#each tiles as t}
        <g transform={t.at} class="lines">
          {#if t.river}<path class="river" d={t.river} />{/if}
          {#if t.brook}<path class="brook" d={t.brook} />{/if}
          {#if t.street}<path class="street" d={t.street} />{/if}
          <path class="minor" d={t.minor} />
          <path class="road" d={t.road} />
          <path class="trunk" d={t.trunk} />
          <path class="motor" d={t.motor} />
        </g>
      {/each}
      <g class="lines" transform="translate(1524 430) scale(.33333)">
        <path class="street" d="M350 1080 300 960 240 900M350 1080 380 960 430 860M350 1080 440 1000 550 950M350 1080 250 1050 165 1040M350 1080 260 1150 165 1180M350 1080 330 1180 300 1250M350 1080 400 1150 480 1200M350 1080 440 1110 490 1100M230 960 300 1000 370 1010 480 1000M220 930 290 970 400 950 460 900M190 1110 260 1090 310 1050 320 960 310 880M270 1230 310 1160 400 1130 430 1060 490 1020M210 1160 300 1120 370 1160 440 1150M555 950 620 945M540 900 560 930" />
      </g>
      {#each shields as [name, x, y, w]}
        <rect class={name[0] === 'M' ? 'sign m' : 'sign'} {x} {y} width={w} height="19" rx="2" />
        <text class={name[0] === 'M' ? 'ref m' : 'ref'} x={x + w / 2} y={y + 14.500}>{name}</text>
      {/each}
      {#each places as [name, x, y]}<text class="place" {x} {y}>{name}</text>{/each}
      {#each cities as [name, x, y]}<text class="place big" {x} {y}>{name}</text>{/each}
      <path fill="#0f7a22" d="M1213 727h8v8h-8z" />
      <path stroke="#5fce6c" stroke-width=".8" d="M1217 727v8M1213 730.500h8" />
      <path fill="#7a0f0f" d="M1153.500 888h4v2.500h2.500v3h-2.500v2.500h-4v-2.500H1151v-3h2.500z" />
      <path stroke="#e02222" stroke-width="1" d="M1155.500 889v6M1152 892h7" />
    </svg>
  </section>

  <div class="modal" role="dialog">
    <header><h2>Please confirm</h2><span class="x">×</span></header>
    <div class="body"><div class="alert">Do you want to stop the running task?</div></div>
    <footer><button>Yes</button><button>No</button></footer>
  </div>
</div>

<style>
  :global(body) { margin: 0; overflow: hidden; }
  .app {
    position: relative; display: flex; width: 1938px; height: 1262px; overflow: hidden;
    font: 21px/30px "Liberation Sans", Arial, sans-serif; color: #333;
  }
  button { font: inherit; box-sizing: border-box; margin: 0; }
  .panel {
    position: relative; z-index: 1; box-sizing: border-box; width: 1118px; height: 100%; flex: none;
    display: flex; flex-direction: column; background: #ddd; border-right: 1px solid #ddd;
    box-shadow: 0 14px 22px 4px #000;
  }
  .panel-head { display: flex; align-items: flex-start; height: 53px; background: #666; }
  .menu {
    display: flex; align-items: flex-start; width: 57px; height: 58px; margin-top: 1px; padding: 5px 0 0 12px;
    flex: none; background: #fff; border: solid; border-width: 3px 3px 3px 2px; border-color: #ccc #777 #777 #ccc;
  }
  .ink { fill: #333; }
  .paper { fill: #fff; }
  h1 { margin: 4px 0 0 28px; font-size: 37.500px; line-height: 42px; letter-spacing: .15px; color: #fff; }
  .content { flex: 1; padding: 21px 45px 0 39px; }
  .filter { display: flex; align-items: flex-start; }
  label { width: 140px; padding-top: 9px; margin-right: 40px; font-weight: bold; color: #3c3c3c; }
  input {
    box-sizing: border-box; width: 261px; height: 47px; padding: 3px 8px 0; border: 1px solid #ced4da;
    border-radius: 4px; background: #fdfdfd; color: #495057; font: 19.800px "Open Sans", "Noto Sans", sans-serif;
    letter-spacing: .1px;
  }
  .primary {
    display: block; width: 112px; height: 50px; margin: 30px 0 15px; padding: 0; border: 0; border-radius: 6px;
    background: #0b6e9b; color: #fff;
  }
  .table { font: 19.600px/30px "Open Sans", "Noto Sans", sans-serif; color: #111; }
  .row {
    display: grid; grid-template-columns: 189px 142px 284px 122px 1fr; align-items: center; height: 40px;
    padding-left: 11px; border-bottom: 1px solid #e3e8ea;
  }
  .row span { padding-top: 2.500px; }
  .row .date { letter-spacing: .18px; }
  .row.head {
    height: 90px; padding-left: 15px; background: #f8f9fa; color: #495057; font-weight: 500;
    -webkit-text-stroke: .3px #495057;
  }
  .row.head span:last-child { width: 110px; }
  .row.pending { height: 55px; background: #d3eef2; }
  .row.done { background: #dfefd8; }
  .row.tall { height: 41px; }
  .panel-foot { height: 61px; background: #bababa; }
  .close-panel { width: 91px; margin: 7px 0 0 510px; background: #006699; }

  .side { flex: 1; }
  .topbar { height: 66px; background: #00304d; overflow: hidden; }
  .search {
    box-sizing: border-box; width: 600px; height: 45px; margin: 10px 0 0 330px; padding-left: 15px; background: #fff;
    border: 1px solid #ccc; border-radius: 4px; color: #999; font-size: 18px; line-height: 43px;
  }
  .map { display: block; background: #d2f7e1; }
  .urban { fill: #f5f5f5; }
  .sand { fill: #f3eee2; }
  .wood { fill: #bff0d3; }
  .water { fill: #90daee; }
  .lines { fill: none; stroke-linejoin: round; stroke-linecap: round; }
  .river { stroke: #90daee; stroke-width: 4; }
  .brook { stroke: #b4e8ea; stroke-width: 2; }
  .street { stroke: #d3dce6; stroke-width: 4; }
  .minor { stroke: #b5d3cf; stroke-width: 3.800; }
  .road { stroke: #a5bacb; stroke-width: 4.800; }
  .trunk { stroke: #98a9cd; stroke-width: 9.500; }
  .motor { stroke: #98a8cd; stroke-width: 12.500; }
  .sign { fill: #689f43; }
  .sign.m { fill: #7370c9; }
  .ref { font: 700 14px Roboto, sans-serif; letter-spacing: .1px; fill: #ffe014; text-anchor: middle; }
  .ref.m { fill: #fff; }
  .place {
    font: 400 17.750px Roboto, sans-serif; fill: #3f4447; text-anchor: middle; paint-order: stroke;
    stroke: #fff; stroke-width: 3.500px; stroke-linejoin: round;
  }
  .big { font-weight: 500; font-size: 19px; fill: #303437; }

  .modal {
    position: absolute; z-index: 2; left: 833px; top: 43px; width: 868px; height: 398px; display: flex;
    flex-direction: column; background: #fff; background-clip: padding-box; border: 1px solid rgba(0, 0, 0, .3);
    border-radius: 9px; box-shadow: 0 7px 22px rgba(0, 0, 0, .5);
  }
  .modal header {
    display: flex; justify-content: space-between; height: 84px; padding: 0 23px 0 22px; border-bottom: 1px solid #e5e5e5;
  }
  h2 { margin: 23px 0 0; font-weight: 400; font-size: 27px; line-height: 38px; }
  .x { margin-top: 19px; font-weight: bold; font-size: 31.500px; color: #ccc; -webkit-text-stroke: 1.300px #ccc; }
  .body { height: 174px; padding: 30px 30px 0; }
  .alert {
    box-sizing: border-box; height: 91px; padding: 17px 22px; border: 1px solid #bce8f1; border-radius: 6px;
    background: #d9edf7; color: #3a87b3; font-size: 27px; line-height: 38px;
  }
  .modal footer {
    display: flex; justify-content: flex-end; gap: 8px; padding: 28px 30px 0; border-top: 1px solid #e5e5e5;
  }
  .modal button { height: 50px; padding: 0 18px; border: 1px solid #ccc; border-radius: 6px; background: #fff; color: #333; }
</style>
